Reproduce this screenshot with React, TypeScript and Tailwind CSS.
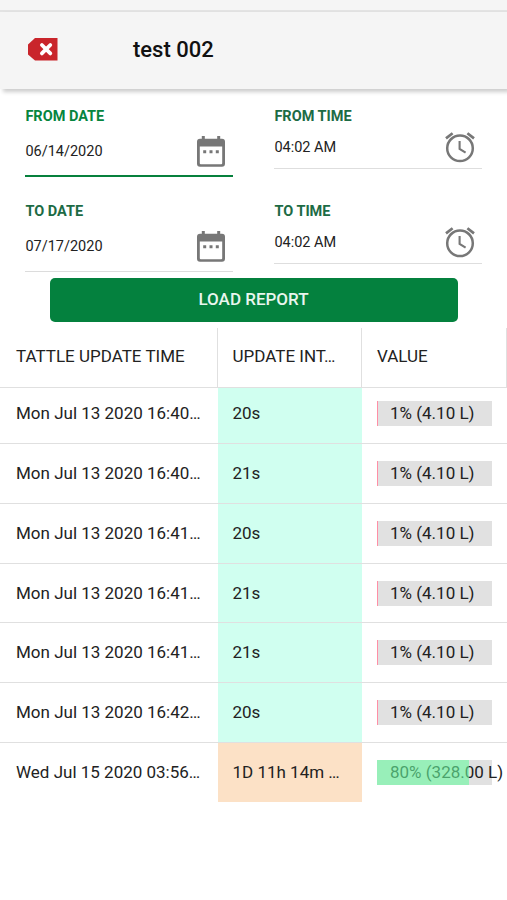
import React from 'react';

interface FieldProps {
    label: string;
    value: string;
    active?: boolean;
}

interface ReportRow {
    time: string;
    interval: string;
    percent: number;
    value: string;
    late?: boolean;
}

const rows: ReportRow[] = [
    { time: 'Mon Jul 13 2020 16:40…', interval: '20s', percent: 1, value: '1% (4.10 L)' },
    { time: 'Mon Jul 13 2020 16:40…', interval: '21s', percent: 1, value: '1% (4.10 L)' },
    { time: 'Mon Jul 13 2020 16:41…', interval: '20s', percent: 1, value: '1% (4.10 L)' },
    { time: 'Mon Jul 13 2020 16:41…', interval: '21s', percent: 1, value: '1% (4.10 L)' },
    { time: 'Mon Jul 13 2020 16:41…', interval: '21s', percent: 1, value: '1% (4.10 L)' },
    { time: 'Mon Jul 13 2020 16:42…', interval: '20s', percent: 1, value: '1% (4.10 L)' },
    { time: 'Wed Jul 15 2020 03:56…', interval: '1D 11h 14m …', percent: 80, value: '80% (328.00 L)', late: true },
];

const BackIcon = () => (
    <svg width="30" height="23" viewBox="0 0 30 23">
        <path d="M7 0H29.5V22.5H7L0 16.5V6.5Z" fill="#c9252b" />
        <path d="M13.9 7L22.3 15.4M22.3 7L13.9 15.4" stroke="#fff" strokeWidth="3.8" strokeLinecap="round" />
    </svg>
);

const CalendarIcon = () => (
    <svg width="28" height="31" viewBox="0 0 28 31" fill="#777">
        <path d="M4.8 0H7.8V2.8H20.2V0H23.2V2.8H25A3 3 0 0 1 28 5.8V27.8A3 3 0 0 1 25 30.8H3A3 3 0 0 1 0 27.8V5.8A3 3 0 0 1 3 2.8H4.8ZM2.8 10.4V27.2A1 1 0 0 0 3.8 28.2H24.2A1 1 0 0 0 25.2 27.2V10.4Z" />
        <path d="M6.2 14.2H9.2V17.2H6.2ZM12.5 14.2H15.5V17.2H12.5ZM18.8 14.2H21.8V17.2H18.8Z" />
    </svg>
);

const AlarmIcon = () => (
    <svg width="30" height="31" viewBox="0 0 30 31" fill="none" stroke="#777">
        <circle cx="15" cy="16.3" r="12.8" strokeWidth="2.5" />
        <path d="M1 6.4L7.6 1.2M29 6.4L22.4 1.2" strokeWidth="2.7" />
        <path d="M14.6 9V17L20.6 20.7" strokeWidth="2.1" />
    </svg>
);

const DateField = ({ label, value, active }: FieldProps) => (
    <div className="h-[95px] w-[208px]">
        <div className={`pt-px text-[14.5px] leading-5 font-bold ${active ? 'text-[#06853e]' : 'text-[#1d6b45]'}`}>{label}</div>
        <div className={`flex h-[50px] justify-between pr-2 ${active ? 'h-[49px] border-b-2 border-[#06803c]' : 'border-b border-[#dcdcdc]'}`}>
            <span className="pt-[15px] text-[14.5px] leading-5">{value}</span>
            <span className="pt-[8.5px]"><CalendarIcon /></span>
        </div>
    </div>
);

const TimeField = ({ label, value }: FieldProps) => (
    <div className="h-[95px] w-[208px]">
        <div className="pt-px text-[14.5px] leading-5 font-bold text-[#1d6b45]">{label}</div>
        <div className="flex h-[42px] justify-between border-b border-[#dedede] pr-[7px]">
            <span className="pt-[11px] text-[14.5px] leading-5">{value}</span>
            <span className="pt-[5px]"><AlarmIcon /></span>
        </div>
    </div>
);

const ValueBar = ({ percent, value }: { percent: number; value: string }) => (
    <div className="relative h-[25px] w-[115px] bg-[#e1e1e1]">
        <span className="block pl-[13px] text-[17px] leading-6 whitespace-nowrap">{value}</span>
        <div
            className={`absolute inset-y-0 left-0 min-w-px ${percent < 20 ? 'bg-[#ff8fa6]' : 'bg-[#67f89e]/60'}`}
            style={{ width: `${percent}%` }}
        ></div>
    </div>
);

export default function App() {
    return (
        <div className="h-[900px] w-[507px] overflow-hidden bg-white font-[Roboto,sans-serif] text-[#222]">
            <div className="h-3 border-b-2 border-[#e3e3e3] bg-[#f5f5f5]"></div>

            {/* Header */}
            <header className="flex h-[77px] items-center bg-[#f5f5f5] pb-[2px] pl-7 shadow-[3px_3px_4px_rgba(0,0,0,0.2)]">
                <BackIcon />
                <h1 className="pl-[75px] text-[22px] leading-7 font-medium text-[#111]">test 002</h1>
            </header>

            {/* Date range */}
            <div className="grid h-[189px] grid-cols-[249px_208px] pt-[17px] pl-[25.4px]">
                <DateField label="FROM DATE" value="06/14/2020" active />
                <TimeField label="FROM TIME" value="04:02 AM" />
                <DateField label="TO DATE" value="07/17/2020" />
                <TimeField label="TO TIME" value="04:02 AM" />
            </div>

            <div className="flex h-[50px] justify-center">
                <button className="h-11 w-[408px] rounded-[5px] bg-[#04813e] text-[17px] font-medium text-[#e9f6ee]">LOAD REPORT</button>
            </div>

            {/* Report table */}
            <div className="grid h-[60px] grid-cols-[218px_144px_145px] border-b border-[#e0e0e0] text-[17px] leading-[57px] whitespace-nowrap">
                <div className="border-r border-[#e0e0e0] pl-4">TATTLE UPDATE TIME</div>
                <div className="border-r border-[#e0e0e0] pl-[14.5px]">UPDATE INT…</div>
                <div className="border-r border-[#e0e0e0] pl-[15px]">VALUE</div>
            </div>
            {rows.map((row, i) => (
                <div
                    key={i}
                    className={`grid grid-cols-[218px_144px_145px] text-[17px] whitespace-nowrap ${i === 0 ? 'h-14 leading-[50px]' : 'leading-[58px]'} ${i > 0 && !row.late ? 'h-[59.8px]' : ''} ${row.late ? 'h-[59px]' : 'border-b border-[#e0e0e0]'}`}
                >
                    <div className="pl-4">{row.time}</div>
                    <div className={`pl-[14.5px] ${row.late ? 'bg-[#fce1c6]' : 'bg-[#d0fff0]'}`}>{row.interval}</div>
                    <div className={`pl-[15px] ${i === 0 ? 'pt-[13px]' : 'pt-[17px]'}`}>
                        <ValueBar percent={row.percent} value={row.value} />
                    </div>
                </div>
            ))}
        </div>
    );
}
